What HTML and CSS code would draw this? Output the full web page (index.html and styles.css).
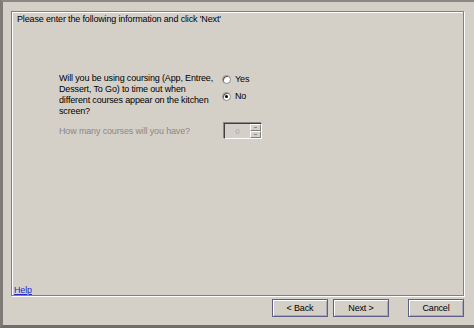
FILE: index.html
```html
<!DOCTYPE html>
<html lang="en">
<head>
    <meta charset="UTF-8">
    <title>Coursing Setup</title>
    <link rel="stylesheet" href="styles.css">
</head>
<body>
    <div class="window">
        <div class="panel">
            <div class="intro">Please enter the following information and click 'Next'</div>
            <div class="question">
                <div class="question-text">Will you be using coursing (App, Entree,<br>Dessert, To Go) to time out when<br>different courses appear on the kitchen<br>screen?</div>
                <div class="options">
                    <label class="option"><span class="radio"></span>Yes</label>
                    <label class="option"><span class="radio checked"></span>No</label>
                </div>
            </div>
            <div class="courses">
                <div class="courses-label">How many courses will you have?</div>
                <div class="spinner">
                    <span class="spinner-value">0</span>
                    <span class="spinner-btns">
                        <span class="spin-btn"></span>
                        <span class="spin-btn"></span>
                    </span>
                </div>
            </div>
            <div class="spacer"></div>
            <a href="#" class="help">Help</a>
        </div>
        <div class="buttons">
            <button class="btn">&lt; Back</button>
            <button class="btn">Next &gt;</button>
            <button class="btn cancel">Cancel</button>
        </div>
    </div>
</body>
</html>
```

FILE: styles.css
```css
body {
    margin: 0;
    background: #d4d0c8;
    font-family: "Liberation Sans", Arial, sans-serif;
    font-size: 9px;
    letter-spacing: -0.15px;
    color: #000;
}
.window {
    width: 474px;
    height: 328px;
    box-sizing: border-box;
    border-top: 2px solid #8a8782;
    border-left: 3px solid #7e7b77;
    border-bottom: 3px solid #6f6d69;
    padding: 9px 10px 0 8px;
    display: flex;
    flex-direction: column;
}
.panel {
    height: 285px;
    box-sizing: border-box;
    border: 1px solid #808080;
    box-shadow: inset 1px 1px 0 #fff, 1px 1px 0 #fff;
    padding: 2px 5px 0 2px;
    display: flex;
    flex-direction: column;
}
.intro {
    padding-left: 3px;
    line-height: 11px;
}
.question {
    display: flex;
    margin-top: 48px;
    margin-left: 45px;
}
.question-text {
    width: 158px;
    white-space: nowrap;
    line-height: 11px;
}
.options {
    margin-left: 5px;
    margin-top: 1px;
    display: flex;
    flex-direction: column;
    gap: 6px;
}
.option {
    display: flex;
    align-items: center;
    gap: 4px;
    line-height: 11px;
}
.radio {
    width: 9px;
    height: 9px;
    box-sizing: border-box;
    border-radius: 50%;
    background: #fff;
    border: 1px solid #8c8a86;
    box-shadow: inset 1px 1px 0 #5a5854;
    position: relative;
}
.radio.checked::after {
    content: "";
    position: absolute;
    left: 2px;
    top: 2px;
    width: 3px;
    height: 3px;
    border-radius: 50%;
    background: #000;
}
.courses {
    display: flex;
    align-items: center;
    margin-top: 6px;
    margin-left: 45px;
}
.courses-label {
    width: 165px;
    color: #8a8884;
}
.spinner {
    width: 38px;
    height: 16px;
    box-sizing: border-box;
    border: 1px solid #fff;
    border-top-color: #404040;
    border-left-color: #404040;
    box-shadow: -1px -1px 0 #8a8884;
    display: flex;
    align-items: center;
    background: #d4d0c8;
}
.spinner-value {
    flex: 1;
    text-align: center;
    color: #a8a6a2;
    font-size: 8px;
}
.spinner-btns {
    display: flex;
    flex-direction: column;
    width: 11px;
    height: 14px;
}
.spin-btn {
    flex: 1;
    border: 1px solid #fff;
    border-right-color: #808080;
    border-bottom-color: #808080;
    background: #d4d0c8;
    position: relative;
}
.spin-btn::after {
    content: "";
    position: absolute;
    left: 3px;
    top: 2px;
    width: 3px;
    height: 1px;
    background: #8a8884;
}
.spacer {
    flex: 1;
}
.help {
    color: #2626cc;
    text-decoration: underline;
    line-height: 11px;
    margin-bottom: -1px;
}
.buttons {
    display: flex;
    justify-content: flex-end;
    gap: 5px;
    margin-top: 3px;
}
.btn {
    width: 56px;
    height: 18px;
    margin: 0;
    padding: 0;
    font-family: "Liberation Sans", Arial, sans-serif;
    font-size: 9px;
    letter-spacing: -0.15px;
    color: #000;
    background: #d4d0c8;
    border: 1px solid #5e5e86;
    box-shadow: inset 1px 1px 0 #fff, inset -1px -1px 0 #a8a6b8;
}
.btn.cancel {
    margin-left: 14px;
}
```
